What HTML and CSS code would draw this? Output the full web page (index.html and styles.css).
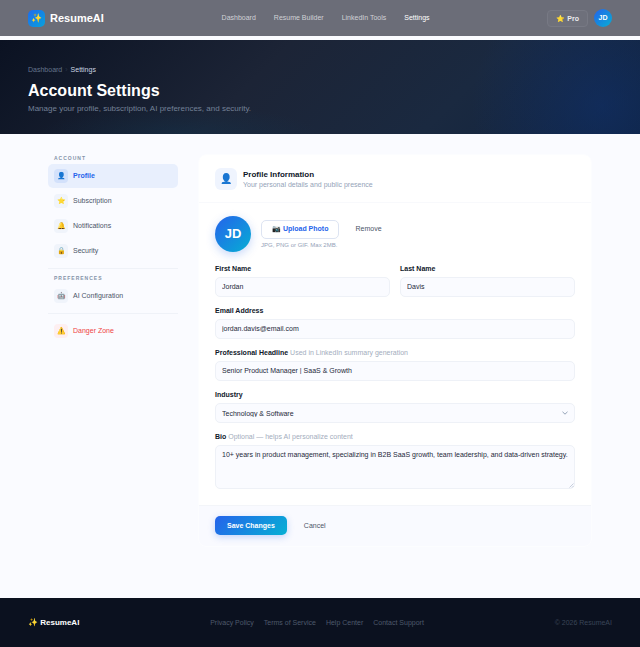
FILE: index.html
```html
<!DOCTYPE html>
<html lang="en">
<head>
<meta charset="utf-8">
<meta name="viewport" content="width=device-width, initial-scale=1">
<title>Account Settings – ResumeAI</title>
<link rel="stylesheet" href="styles.css">
</head>
<body>
<header class="topbar">
  <a class="brand" href="#"><span class="brand-mark">✨</span>ResumeAI</a>
  <nav class="topnav" aria-label="Main">
    <a href="#">Dashboard</a>
    <a href="#">Resume Builder</a>
    <a href="#">LinkedIn Tools</a>
    <a href="#" class="current">Settings</a>
  </nav>
  <div class="account">
    <button type="button" class="plan">⭐ Pro</button>
    <button type="button" class="avatar avatar-small">JD</button>
  </div>
</header>

<section class="hero">
  <nav class="crumbs" aria-label="Breadcrumb">
    <a href="#">Dashboard</a><span class="crumb-sep">›</span><span class="crumb-here">Settings</span>
  </nav>
  <h1>Account Settings</h1>
  <p>Manage your profile, subscription, AI preferences, and security.</p>
</section>

<main class="layout">
  <nav class="sidebar" aria-label="Settings">
    <h2>Account</h2>
    <a class="item active" href="#"><span class="item-icon">👤</span>Profile</a>
    <a class="item" href="#"><span class="item-icon">⭐</span>Subscription</a>
    <a class="item" href="#"><span class="item-icon">🔔</span>Notifications</a>
    <a class="item" href="#"><span class="item-icon">🔒</span>Security</a>
    <hr>
    <h2>Preferences</h2>
    <a class="item" href="#"><span class="item-icon">🤖</span>AI Configuration</a>
    <hr>
    <a class="item danger" href="#"><span class="item-icon">⚠️</span>Danger Zone</a>
  </nav>

  <form class="card">
    <div class="card-head">
      <span class="card-icon">👤</span>
      <div>
        <h2>Profile Information</h2>
        <p>Your personal details and public presence</p>
      </div>
    </div>

    <div class="card-body">
      <div class="photo">
        <span class="avatar avatar-large">JD</span>
        <div>
          <div class="photo-actions">
            <button type="button" class="btn btn-outline">📷 Upload Photo</button>
            <button type="button" class="btn btn-ghost">Remove</button>
          </div>
          <p>JPG, PNG or GIF. Max 2MB.</p>
        </div>
      </div>

      <div class="row">
        <div class="field">
          <label for="first">First Name</label>
          <input id="first" type="text" value="Jordan">
        </div>
        <div class="field">
          <label for="last">Last Name</label>
          <input id="last" type="text" value="Davis">
        </div>
      </div>
      <div class="field">
        <label for="email">Email Address</label>
        <input id="email" type="email" value="jordan.davis@email.com">
      </div>
      <div class="field">
        <label for="headline">Professional Headline <span>Used in LinkedIn summary generation</span></label>
        <input id="headline" type="text" value="Senior Product Manager | SaaS &amp; Growth">
      </div>
      <div class="field">
        <label for="industry">Industry</label>
        <div class="control">
          <select id="industry"><option>Technology &amp; Software</option></select>
          <svg class="chevron" viewBox="0 0 8 8" aria-hidden="true"><path d="M1.500 2.800 4 5.200 6.500 2.800"/></svg>
        </div>
      </div>
      <div class="field">
        <label for="bio">Bio <span>Optional — helps AI personalize content</span></label>
        <div class="control">
          <textarea id="bio">10+ years in product management, specializing in B2B SaaS growth, team leadership, and data-driven strategy.</textarea>
          <svg class="grip" viewBox="0 0 5 5" aria-hidden="true"><path d="M.5 4.500 4.500.5M3 4.500 4.500 3"/></svg>
        </div>
      </div>
    </div>

    <div class="card-foot">
      <button type="submit" class="btn btn-primary">Save Changes</button>
      <button type="button" class="btn btn-ghost">Cancel</button>
    </div>
  </form>
</main>

<footer class="footer">
  <a class="footer-brand" href="#">✨ ResumeAI</a>
  <nav aria-label="Footer">
    <a href="#">Privacy Policy</a>
    <a href="#">Terms of Service</a>
    <a href="#">Help Center</a>
    <a href="#">Contact Support</a>
  </nav>
  <small>© 2026 ResumeAI</small>
</footer>
</body>
</html>
```
FILE: styles.css
```css
* {
  box-sizing: border-box;
}

body {
  margin: 0;
  background: #fafbff;
  color: #0f172a;
  font: 7px/8px "Liberation Sans", Arial, sans-serif;
}

h1, h2, p {
  margin: 0;
}

a {
  color: inherit;
  text-decoration: none;
}

button, input, select, textarea {
  margin: 0;
  font: inherit;
  color: inherit;
}

/* Top bar */
.topbar {
  display: flex;
  align-items: center;
  justify-content: space-between;
  height: 36px;
  margin-bottom: 4px;
  padding: 0 28px;
  background: #6b6d78;
  color: #d0d1d6;
}

.brand {
  display: flex;
  align-items: center;
  gap: 5px;
  color: #fff;
  font-size: 11px;
  font-weight: 700;
}

.brand-mark {
  display: grid;
  place-items: center;
  width: 17px;
  height: 17px;
  border-radius: 5px;
  background: linear-gradient(135deg, #1f6bed, #08a2dc);
  font-size: 9px;
}

.topnav {
  display: flex;
  gap: 18px;
}

.topnav .current {
  color: #fff;
}

.account {
  display: flex;
  align-items: center;
  gap: 6px;
}

.plan {
  padding: 3px 8px;
  border: 1px solid #777984;
  border-radius: 4px;
  background: #6e707b;
  color: #ececef;
  font-weight: 700;
  line-height: 9px;
}

.avatar {
  display: grid;
  place-items: center;
  flex: none;
  padding: 0;
  border: 0;
  border-radius: 50%;
  background: linear-gradient(135deg, #2563eb, #06aed4);
  color: #fff;
  font-weight: 700;
}

.avatar-small {
  width: 18px;
  height: 18px;
}

.avatar-large {
  width: 36px;
  height: 36px;
  box-shadow: 0 3px 10px rgba(37, 99, 235, 0.25);
  font-size: 13px;
}

/* Page heading */
.hero {
  padding: 26px 28px 21px;
  background:
    radial-gradient(circle at 94% 70%, rgba(15, 50, 115, 0.5), transparent 130px),
    radial-gradient(ellipse at 28% 100%, rgba(14, 60, 90, 0.3), transparent 140px),
    linear-gradient(135deg, #0b1222 0%, #1c2436 40%, #1a2940 70%, #10233f 100%);
  color: #64748b;
}

.crumbs {
  display: flex;
  gap: 3px;
}

.crumb-sep {
  color: #283447;
}

.crumb-here {
  color: #cbd5e1;
}

.hero h1 {
  margin: 8px 0 5px;
  color: #fff;
  font-size: 16px;
  line-height: 18px;
}

.hero p {
  color: #738096;
  font-size: 8px;
}

/* Two-column area */
.layout {
  display: grid;
  grid-template-columns: 130px 1fr;
  gap: 20px;
  align-items: start;
  padding: 20px 48px 51px;
}

.sidebar {
  display: flex;
  flex-direction: column;
  gap: 1px;
}

.sidebar h2 {
  margin-bottom: 1px;
  padding: 0 6px;
  color: #8593a9;
  font-size: 5px;
  line-height: 8px;
  letter-spacing: 1px;
  text-transform: uppercase;
}

.sidebar hr {
  width: 100%;
  height: 1px;
  margin: 4px 0;
  border: 0;
  background: #eff2f8;
}

.item {
  display: flex;
  align-items: center;
  gap: 5px;
  height: 24px;
  padding: 0 6px;
  border-radius: 5px;
  color: #4b5568;
}

.item-icon {
  display: grid;
  place-items: center;
  width: 14px;
  height: 14px;
  border-radius: 4px;
  background: #f0f4fb;
}

.item.active {
  background: #e8effd;
  color: #2563eb;
  font-weight: 700;
}

.item.active .item-icon {
  background: #d3e1fb;
}

.item.danger {
  color: #ef4444;
}

.item.danger .item-icon {
  background: #fdeff1;
}

/* Profile card */
.card {
  min-width: 0;
  overflow: hidden;
  border: 1px solid #fcfdff;
  border-radius: 8px;
  background: #fff;
}

.card-head {
  display: flex;
  align-items: center;
  gap: 6px;
  padding: 13px 16px 12px;
  border-bottom: 1px solid #f8f9fc;
}

.card-icon {
  display: grid;
  place-items: center;
  width: 22px;
  height: 22px;
  border-radius: 6px;
  background: #eff4fe;
  font-size: 10px;
}

.card-head h2 {
  margin-bottom: 1px;
  font-size: 8px;
  line-height: 10px;
}

.card-head p,
.photo p {
  color: #94a3b8;
}

.photo p {
  font-size: 6px;
}

.card-body {
  display: flex;
  flex-direction: column;
  gap: 10px;
  padding: 13px 16px 16px;
}

.photo {
  display: flex;
  align-items: center;
  gap: 10px;
  margin-bottom: 3px;
}

.photo-actions {
  display: flex;
  gap: 5px;
  margin-bottom: 2px;
}

.btn {
  height: 19px;
  padding: 0 10px;
  border: 1px solid transparent;
  border-radius: 5px;
  background: none;
}

.btn-outline {
  border-color: #dde4f2;
  background: #fff;
  color: #2563eb;
  font-weight: 700;
}

.btn-ghost {
  color: #4b5568;
}

.btn-primary {
  padding: 0 12px;
  border: 0;
  background: linear-gradient(135deg, #2563eb, #06b0d4);
  box-shadow: 0 2px 7px rgba(37, 99, 235, 0.25);
  color: #fff;
  font-weight: 700;
}

.row {
  display: grid;
  grid-template-columns: 1fr 1fr;
  gap: 10px;
}

.field {
  display: flex;
  flex-direction: column;
  gap: 4px;
  min-width: 0;
}

.field label {
  font-weight: 700;
}

.field label span {
  color: #a3adbd;
  font-weight: 400;
}

.field input,
.field select,
.field textarea {
  display: block;
  width: 100%;
  height: 20px;
  padding: 0 6px;
  border: 1px solid #eef1f7;
  border-radius: 5px;
  background: #fafbff;
  color: #1e293b;
  line-height: normal;
}

.field input {
  padding-bottom: 1px;
}

.field select {
  appearance: none;
}

.field textarea {
  height: 44px;
  padding: 4px 4px 4px 6px;
  line-height: 10px;
  resize: none;
}

.control {
  position: relative;
}

.control svg {
  position: absolute;
  fill: none;
  stroke: #94a3b8;
  pointer-events: none;
}

.chevron {
  top: 6px;
  right: 6px;
  width: 8px;
  height: 8px;
}

.grip {
  right: 1px;
  bottom: 1px;
  width: 5px;
  height: 5px;
  stroke-width: 0.5;
}

.card-foot {
  display: flex;
  gap: 6px;
  padding: 10px 16px 11px;
  border-top: 1px solid #f3f5f9;
  background: #f9faff;
}

/* Page footer */
.footer {
  display: flex;
  align-items: center;
  justify-content: space-between;
  height: 49px;
  padding: 0 28px;
  background: #0b111f;
  color: #4e596b;
}

.footer-brand {
  color: #fff;
  font-size: 8px;
  font-weight: 700;
}

.footer nav {
  display: flex;
  gap: 10px;
}

.footer small {
  color: #3a4557;
  font-size: 7px;
}
```
